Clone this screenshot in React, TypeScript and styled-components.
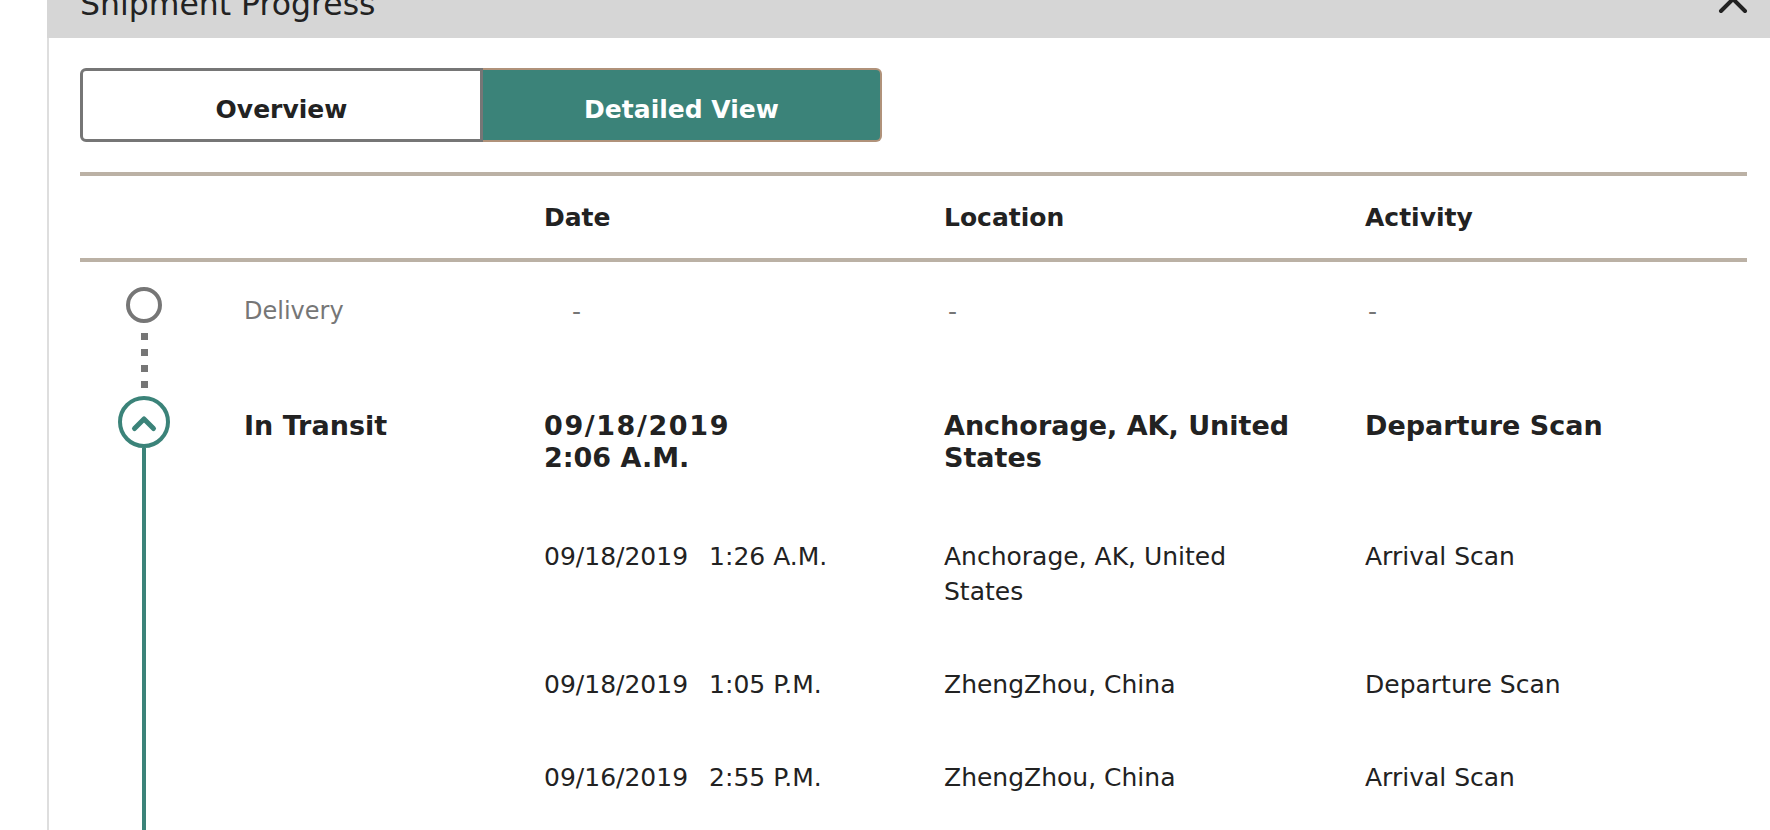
import React from "react";
import styled, { createGlobalStyle } from "styled-components";

const TEAL = "#3b8379";
const RULE = "#bbb1a5";
const MUTED = "#767676";

const GlobalStyle = createGlobalStyle`
  html, body {
    margin: 0;
    padding: 0;
    overflow: hidden;
    background: #fff;
  }
  body {
    font-family: "DejaVu Sans", Verdana, sans-serif;
    color: #222;
  }
`;

type Scan = {
  date: string;
  time: string;
  location: string;
  activity: string;
};

const scans: Scan[] = [
  { date: "09/18/2019", time: "1:26 A.M.", location: "Anchorage, AK, United States", activity: "Arrival Scan" },
  { date: "09/18/2019", time: "1:05 P.M.", location: "ZhengZhou, China", activity: "Departure Scan" },
  { date: "09/16/2019", time: "2:55 P.M.", location: "ZhengZhou, China", activity: "Arrival Scan" },
];

const App = () => {
  return (
    <>
      <GlobalStyle />
      <Panel>
        <PanelHeader>
          <Title>Shipment Progress</Title>
          <Collapse width="30" height="20" viewBox="0 0 30 20">
            <path d="M3 16 L15 4 L27 16" fill="none" stroke="#222" strokeWidth="4" strokeLinecap="round" strokeLinejoin="round" />
          </Collapse>
        </PanelHeader>

        <Body>
          <Toggle>
            <ToggleButton>Overview</ToggleButton>
            <ToggleButton $active>Detailed View</ToggleButton>
          </Toggle>

          <HeadRow>
            <span />
            <HeadCell>Date</HeadCell>
            <HeadCell>Location</HeadCell>
            <HeadCell>Activity</HeadCell>
          </HeadRow>

          {/* not delivered yet */}
          <Stage>
            <Rail $top={25}>
              <svg width="36" height="36" viewBox="0 0 36 36">
                <circle cx="18" cy="18" r="16" fill="none" stroke={MUTED} strokeWidth="4" />
              </svg>
              <Dotted />
            </Rail>
            <Events>
              <EventRow $pt={32} $pb={67}>
                <Cell $muted $small>Delivery</Cell>
                <Cell $muted $indent={28}>-</Cell>
                <Cell $muted $indent={4}>-</Cell>
                <Cell $muted $indent={3}>-</Cell>
              </EventRow>
            </Events>
          </Stage>

          <Stage>
            <Rail $top={0}>
              <svg width="52" height="52" viewBox="0 0 52 52">
                <circle cx="26" cy="26" r="24" fill="#fff" stroke={TEAL} strokeWidth="4" />
                <path d="M16.5 32.5 L26 23 L35.5 32.5" fill="none" stroke={TEAL} strokeWidth="5" strokeLinecap="round" strokeLinejoin="round" />
              </svg>
              <Solid />
            </Rail>
            <Events>
              <EventRow $pt={14} $pb={36}>
                <Cell $bold>In Transit</Cell>
                <Cell $bold>
                  <Day>09/18/2019</Day>
                  <div>2:06 A.M.</div>
                </Cell>
                <Cell $bold $location>Anchorage, AK, United States</Cell>
                <Cell $bold>Departure Scan</Cell>
              </EventRow>
              {scans.map((s, i) => (
                <EventRow key={i} $pt={29} $pb={29}>
                  <span />
                  <Cell>
                    {s.date} <Time>{s.time}</Time>
                  </Cell>
                  <Cell $location>{s.location}</Cell>
                  <Cell>{s.activity}</Cell>
                </EventRow>
              ))}
            </Events>
          </Stage>
        </Body>
      </Panel>
    </>
  );
};

export default App;

const Panel = styled.section`
  margin-left: 47px;
  height: 830px;
  overflow: hidden;
  display: flex;
  flex-direction: column;
`;

const PanelHeader = styled.header`
  flex: none;
  height: 38px;
  background: #d6d6d6;
  display: flex;
  justify-content: space-between;
  align-items: flex-start;
  padding: 0 22px 0 33px;
  overflow: hidden;
`;

const Title = styled.h2`
  margin: -11px 0 0;
  font-size: 31.5px;
  line-height: 1;
  font-weight: 400;
  color: #222;
  white-space: nowrap;
`;

const Collapse = styled.svg`
  display: block;
  margin-top: -5px;
`;

const Body = styled.div`
  flex: 1;
  min-height: 0;
  border-left: 2px solid #dedede;
  padding: 30px 23px 0 31px;
  display: flex;
  flex-direction: column;
`;

const Toggle = styled.div`
  flex: none;
  display: flex;
  width: 802px;
  height: 74px;
`;

const ToggleButton = styled.button<{ $active?: boolean }>`
  flex: 1;
  box-sizing: border-box;
  padding: 8px 0 0;
  font-family: "DejaVu Sans", Verdana, sans-serif;
  font-size: 25px;
  font-weight: 700;
  cursor: pointer;
  background: ${(p) => (p.$active ? TEAL : "#fff")};
  color: ${(p) => (p.$active ? "#fff" : "#222")};
  border: ${(p) => (p.$active ? "2px solid #b0927a" : `3px solid ${MUTED}`)};
  border-left-width: ${(p) => (p.$active ? "0" : "3px")};
  border-radius: ${(p) => (p.$active ? "0 6px 6px 0" : "6px 0 0 6px")};
`;

const HeadRow = styled.div`
  flex: none;
  margin-top: 30px;
  height: 82px;
  display: grid;
  grid-template-columns: 464px 400px 421px 1fr;
  align-items: center;
  border-top: 4px solid ${RULE};
  border-bottom: 4px solid ${RULE};
`;

const HeadCell = styled.div`
  font-size: 25px;
  font-weight: 700;
  color: #222;
`;

const Stage = styled.div`
  display: grid;
  grid-template-columns: 128px 1fr;
  column-gap: 36px;

  &:last-child {
    flex: 1;
  }
`;

const Rail = styled.div<{ $top: number }>`
  display: flex;
  flex-direction: column;
  align-items: center;
  padding-top: ${(p) => p.$top}px;

  svg {
    display: block;
    flex: none;
  }
`;

const Dotted = styled.div`
  flex: 1;
  width: 7px;
  margin: 10px 0 8px;
  background: repeating-linear-gradient(to bottom, ${MUTED} 0 7px, transparent 7px 16px);
`;

const Solid = styled.div`
  flex: 1;
  width: 4px;
  background: ${TEAL};
`;

const Events = styled.div`
  display: flex;
  flex-direction: column;
`;

const EventRow = styled.div<{ $pt: number; $pb: number }>`
  display: grid;
  grid-template-columns: 300px 400px 421px 1fr;
  align-items: start;
  padding: ${(p) => p.$pt}px 0 ${(p) => p.$pb}px;
`;

const Cell = styled.div<{
  $bold?: boolean;
  $muted?: boolean;
  $small?: boolean;
  $indent?: number;
  $location?: boolean;
}>`
  font-size: ${(p) => (p.$bold ? 27 : p.$small ? 24 : 25)}px;
  line-height: ${(p) => (p.$bold ? 32 : 35)}px;
  font-weight: ${(p) => (p.$bold ? 700 : 400)};
  color: ${(p) => (p.$muted ? MUTED : "#222")};
  padding-left: ${(p) => p.$indent ?? 0}px;
  padding-right: ${(p) => (p.$location ? 60 : 0)}px;
`;

const Day = styled.div`
  letter-spacing: 1.6px;
`;

const Time = styled.span`
  margin-left: 13px;
`;
